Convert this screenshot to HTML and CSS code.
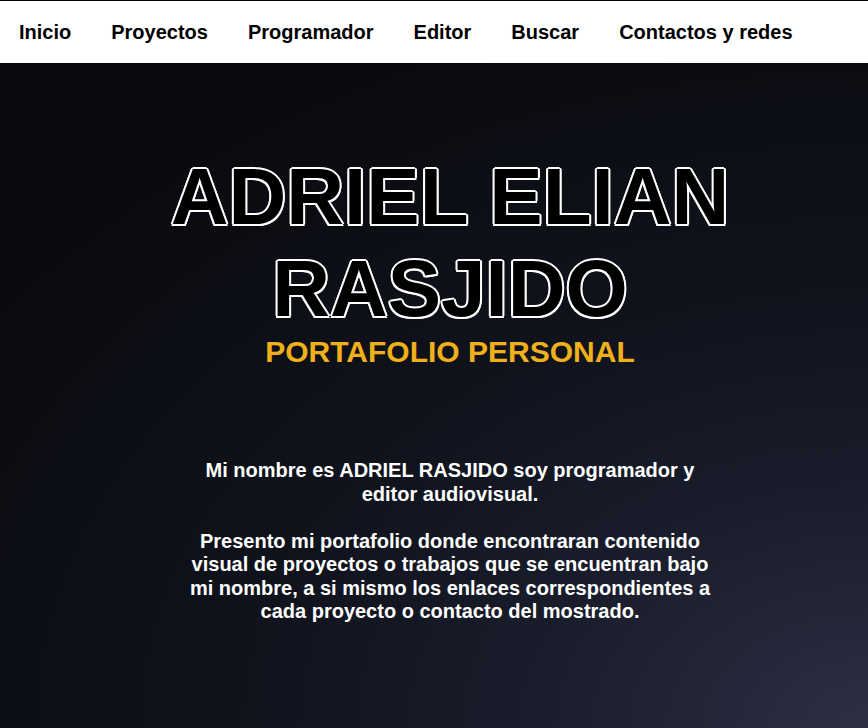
FILE: index.html
```html
<!DOCTYPE html>
<html lang="es">
<head>
<meta charset="utf-8">
<title>Adriel Elian Rasjido</title>
<link rel="stylesheet" href="styles.css">
</head>
<body>
<nav class="nav">
  <a class="nav-link" href="#">Inicio</a>
  <a class="nav-link" href="#">Proyectos</a>
  <a class="nav-link" href="#">Programador</a>
  <a class="nav-link" href="#">Editor</a>
  <a class="nav-link" href="#">Buscar</a>
  <a class="nav-link" href="#">Contactos y redes</a>
</nav>
<main class="hero">
  <h1 class="title">ADRIEL ELIAN<br>RASJIDO</h1>
  <h2 class="subtitle">PORTAFOLIO PERSONAL</h2>
  <p class="intro">Mi nombre es ADRIEL RASJIDO soy programador y editor audiovisual.<br><br>Presento mi portafolio donde encontraran contenido visual de proyectos o trabajos que se encuentran bajo mi nombre, a si mismo los enlaces correspondientes a cada proyecto o contacto del mostrado.</p>
</main>
</body>
</html>
```
FILE: styles.css
```css
html, body {
  margin: 0;
  padding: 0;
  height: 100%;
}
body {
  font-family: "Liberation Sans", Arial, sans-serif;
  background: #0b0d13;
  display: flex;
  flex-direction: column;
}
.nav {
  display: flex;
  background: #fff;
  border-top: 1px solid #000;
  height: 62px;
  align-items: center;
  padding-left: 19px;
  gap: 40px;
}
.nav-link {
  color: #000;
  text-decoration: none;
  font-weight: bold;
  font-size: 20px;
}
.hero {
  flex: 1;
  display: flex;
  flex-direction: column;
  align-items: center;
  padding-left: 32px;
  background: radial-gradient(ellipse 120% 110% at 100% 100%, #2d2f43 0%, #1a1e2d 30%, #10131c 60%, #0a0b10 100%);
}
.title {
  margin: 88px 0 0;
  font-size: 80px;
  line-height: 92px;
  color: #000;
  text-shadow:
    2px 0 0 #fff, -2px 0 0 #fff, 0 2px 0 #fff, 0 -2px 0 #fff,
    1.5px 1.5px 0 #fff, -1.5px 1.5px 0 #fff, 1.5px -1.5px 0 #fff, -1.5px -1.5px 0 #fff;
  text-align: center;
  font-weight: bold;
}
.subtitle {
  margin: 0;
  font-size: 30px;
  line-height: 34px;
  color: #f0b01c;
  text-align: center;
  font-weight: bold;
}
.intro {
  width: 540px;
  margin: 90px 0 0;
  color: #fff;
  font-size: 20px;
  line-height: 23.5px;
  font-weight: bold;
  text-align: center;
}
```
